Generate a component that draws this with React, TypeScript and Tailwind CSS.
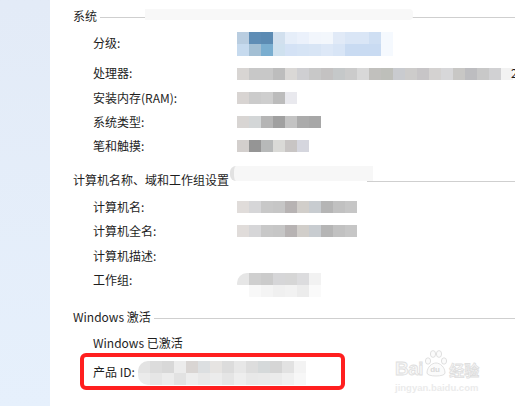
import React from 'react';

type Cells = string[];

function Mosaic({ rows, className = '' }: { rows: Cells[]; className?: string }) {
  return (
    <div className={`flex flex-col ${className}`}>
      {rows.map((row, i) => (
        <div key={i} className="flex">
          {row.map((c, j) => (
            <div key={j} className="w-[12px] h-[12px]" style={{ backgroundColor: c }} />
          ))}
        </div>
      ))}
    </div>
  );
}

function Heading({ title, lineFrom }: { title: string; lineFrom?: string }) {
  return (
    <div className="flex items-center h-4 relative">
      <span className="whitespace-nowrap">{title}</span>
      <div className={`flex-1 border-t border-[#cfcfcf] mt-[3px] ${lineFrom ?? 'ml-0.5'}`} />
    </div>
  );
}

function Row({ label, children, className = '' }: { label: string; children?: React.ReactNode; className?: string }) {
  return (
    <div className={`flex items-center h-6 pl-5 ${className}`}>
      <span className="w-[144px] shrink-0 whitespace-nowrap">{label}</span>
      {children}
    </div>
  );
}

const gradeTop = ['#b9cde0', '#5f8db5', '#5c8bb3', '#d2e0ee', '#e6eef9', '#ebf1fb', '#f2f6fc', '#f3f7fc', '#e1eaf7', '#dae6f6', '#dae6f6', '#cfdff3', '#f5f9fe'];
const gradeBottom = ['#c6daee', '#a3bfd4', '#7aaed0', '#cfe1ef', '#d4e2f5', '#d6e4f5', '#d8e5f5', '#dde8f7', '#d8e5f6', '#c9dbf2', '#c9dbf2', '#c9dbf2', '#f5f9fe'];
const cpu = ['#d8d5d3', '#c8c8c8', '#c8c8c8', '#bdbdbd', '#dad8d6', '#cfcfd2', '#c8c8c8', '#c4c2c2', '#c5c8c9', '#cbcbcb', '#d8d8d8', '#c1c0bd', '#bebfba', '#c9cbcf', '#cdcccb', '#c7c5c7', '#d4d2d1', '#d7d7d9', '#c8c7c5', '#bdbdc0', '#c8c8c8', '#d1d1d3', '#f2f2f2'];
const ram = ['#d8d4d2', '#cbcbcb', '#cecece', '#bcbcbc', '#e9e9ee'];
const sysType = ['#d8d5d3', '#d3d6d7', '#b5b5b5', '#a0a0a0', '#c3c3c3', '#ababab', '#a7a7a7'];
const pen = ['#d3cfcd', '#959595', '#b7b9b9', '#dadad7', '#c8c5c4', '#d5d6de'];
const pcName = ['#e0dcda', '#d6d6d8', '#c8c8c8', '#c6c6c6', '#b7b3b3', '#d1ceca', '#c8ccd0', '#b5b5b5', '#c1c1c1', '#c6c6c6'];
const workgroupTop = ['#e6e6e6', '#cfcfcf', '#cbcbcb', '#d6d6d8', '#d6d6d6', '#dcdcde', '#f2f2f2'];
const workgroupBottom = ['#ffffff', '#f8f8f8', '#f4f4f4', '#f0f0f0', '#f2f2f2', '#ececec', '#fafafa'];
const productTop = ['#e3e3e3', '#dcdcdc', '#d8d8d8', '#ececec', '#d9d5d3', '#dcdfe1', '#e6e4e2', '#dcdcdc', '#e7e7e7', '#dddddd', '#d5d9da', '#d5d5d5', '#e2e2e2', '#f3f3f3'];
const productBottom = ['#ebebeb', '#e6e6e6', '#ececec', '#e2e2e2', '#ededed', '#e8e8e8', '#ececec', '#e5e5e5', '#eeeeee', '#e8e8e8', '#e9e9e9', '#ebebeb', '#f0f0f0', '#f7f7f7'];

function Watermark() {
  return (
    <div className="absolute left-[395px] top-[349px] flex flex-col items-start select-none">
      <div className="flex items-end h-[29px]">
        <span className="font-['Liberation_Sans',sans-serif] font-bold text-[19px] leading-none tracking-tight text-[#f7f7f7] [-webkit-text-stroke:0.8px_#dedede]">Bai</span>
        <div className="relative w-[26px] h-[29px]">
          <svg width="26" height="29" viewBox="0 0 26 29" className="absolute left-0 top-0">
            <g fill="#fbfbfb" stroke="#dcdcdc" strokeWidth="0.9">
              <ellipse cx="5" cy="12" rx="2.6" ry="3.2" />
              <ellipse cx="10" cy="5" rx="2.6" ry="3.4" />
              <ellipse cx="16" cy="5" rx="2.6" ry="3.4" />
              <ellipse cx="21" cy="12" rx="2.6" ry="3.2" />
              <path d="M4 24 C4 18 9 14 13 14 C17 14 22 18 22 24 C22 28 4 28 4 24 Z" />
            </g>
          </svg>
          <span className="absolute left-[7px] top-[17px] font-['Liberation_Sans',sans-serif] font-bold text-[8px] leading-none text-[#d9d9d9]">du</span>
        </div>
        <span className="font-['Noto_Sans_CJK_SC',sans-serif] font-bold text-[15px] leading-none mb-px text-[#f7f7f7] [-webkit-text-stroke:0.8px_#dedede]">经验</span>
      </div>
      <span className="mt-[5px] font-['Liberation_Sans',sans-serif] font-bold text-[9.5px] leading-none text-[#ebebeb]">jingyan.baidu.com</span>
    </div>
  );
}

export default function App() {
  return (
    <div className="relative w-[515px] h-[406px] overflow-hidden flex bg-white text-[12px] leading-4 text-[#1e1e1e] font-['Noto_Sans_CJK_SC',sans-serif]">
      <div className="w-[50px] shrink-0 bg-gradient-to-b from-[#e3ebf7] to-[#e6f0fc]" />

      <div className="flex-1 pl-[23px] pt-2 flex flex-col">
        <div className="relative">
          <Heading title="系统" lineFrom="ml-[3px]" />
          <div className="absolute left-[72px] top-[1px] w-[268px] h-[11px] bg-[#f8f8f8] rounded-r-sm" />
        </div>

        <Row label="分级:" className="mt-[7px]">
          <Mosaic rows={[gradeTop, gradeBottom]} className="mt-[2px]" />
        </Row>
        <Row label="处理器:" className="mt-[6px]">
          <Mosaic rows={[cpu]} className="mt-[2px]" />
          <span className="-ml-[2px]">2</span>
        </Row>
        <Row label="安装内存(RAM):" className="mt-px">
          <Mosaic rows={[ram]} className="mt-[-1px]" />
        </Row>
        <Row label="系统类型:">
          <Mosaic rows={[sysType]} className="mt-[-1px]" />
        </Row>
        <Row label="笔和触摸:">
          <Mosaic rows={[pen]} className="mt-[-1px]" />
        </Row>

        <div className="relative mt-[14px]">
          <Heading title="计算机名称、域和工作组设置" lineFrom="ml-[138px]" />
          <div className="absolute left-[157px] top-[-6px] w-[143px] h-[15px] bg-[#f7f7f7] rounded-l-md border-l-4 border-[#e2e2e2]" />
        </div>

        <Row label="计算机名:" className="mt-[7px]">
          <Mosaic rows={[pcName]} className="mt-[-1px]" />
        </Row>
        <Row label="计算机全名:">
          <Mosaic rows={[pcName]} className="mt-[-1px]" />
        </Row>
        <Row label="计算机描述:" className="mt-px" />
        <Row label="工作组:">
          <Mosaic rows={[workgroupTop, workgroupBottom]} className="mt-[10px] rounded-bl-[14px] rounded-tl-[10px] overflow-hidden" />
        </Row>

        <div className="mt-[17px]">
          <Heading title="Windows 激活" lineFrom="ml-[3px]" />
        </div>

        <Row label="Windows 已激活" className="mt-[6px]" />
        <div className="ml-[7px] mt-[-2px] w-[265px] h-[37px] border-4 border-[#ff1f1f] rounded-md pl-[9px] flex items-center">
          <span className="whitespace-nowrap">产品 ID:</span>
          <Mosaic rows={[productTop, productBottom]} className="ml-[3px] mt-[3px] rounded-l-[10px] overflow-hidden" />
        </div>
      </div>

      <Watermark />
    </div>
  );
}
